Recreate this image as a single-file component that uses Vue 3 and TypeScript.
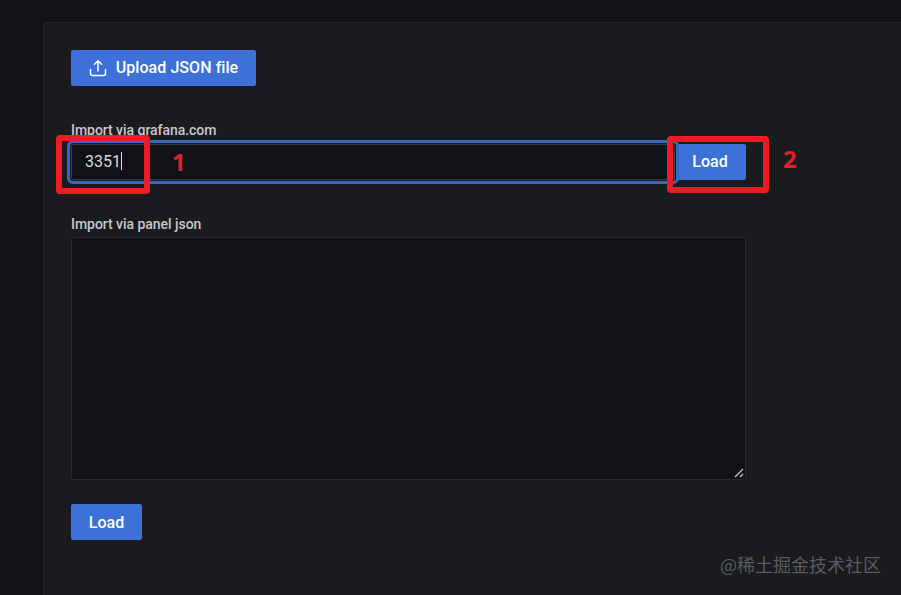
<script setup lang="ts">
const title: string = 'Upload JSON file'
</script>

<template>
  <div class="page">
    <main class="panel">
      <button class="btn upload">
        <svg class="icon" viewBox="0 0 18 18" width="18" height="18" fill="none" stroke="#fff" stroke-width="1.5" stroke-linecap="round" stroke-linejoin="round">
          <path d="M1.5 10.5v4a2 2 0 0 0 2 2h11a2 2 0 0 0 2-2v-4" />
          <path d="M9 12V2M5.5 5.3 9 1.8l3.5 3.5" />
        </svg>
        <span class="upload-text">{{ title }}</span>
      </button>

      <label class="label first">Import via grafana.com</label>
      <div class="row">
        <div class="field">
          <span class="value">3351</span><span class="caret"></span>
        </div>
        <button class="btn load-inline">Load</button>
      </div>

      <label class="label second">Import via panel json</label>
      <div class="area">
        <svg class="grip" viewBox="0 0 10 10" width="10" height="10" stroke="#c8c8c8" stroke-width="1.3" fill="none">
          <path d="M1 9 9 1M6 9l3-3" />
        </svg>
      </div>

      <button class="btn load">Load</button>
    </main>

    <div class="mark mark-one"></div>
    <span class="num num-one">1</span>
    <div class="mark mark-two"></div>
    <span class="num num-two">2</span>
    <span class="watermark">@稀土掘金技术社区</span>
  </div>
</template>

<style>
html, body { margin: 0; background: #111217; }
</style>

<style scoped>
.page {
  position: relative;
  width: 901px;
  height: 595px;
  overflow: hidden;
  background: #111217;
  font-family: Roboto, "Liberation Sans", sans-serif;
  box-sizing: border-box;
  padding: 22px 0 0 43px;
}
.panel {
  box-sizing: border-box;
  height: 573px;
  background: #1a1b1f;
  border: 1px solid #202226;
  border-right: 0;
  border-bottom: 0;
  padding: 27px 0 0 27px;
  display: flex;
  flex-direction: column;
  align-items: flex-start;
}
.btn {
  border: 0;
  border-radius: 2px;
  background: #3d71d9;
  color: #fff;
  font-family: inherit;
  font-size: 16px;
  font-weight: 500;
  height: 36px;
  padding: 0 0 1px;
  box-sizing: border-box;
  display: flex;
  align-items: center;
  justify-content: center;
}
.upload { width: 185px; gap: 9px; }
.upload-text { letter-spacing: 0.06px; }
.icon { flex: none; }
.label {
  color: #c7c8cc;
  font-size: 14px;
  font-weight: 500;
  line-height: 16px;
  letter-spacing: -0.04px;
}
.first { margin-top: 36px; }
.row {
  display: flex;
  gap: 2px;
  margin-top: 6px;
  width: 675px;
  height: 36px;
}
.field {
  flex: 1;
  position: relative;
  z-index: 1;
  box-sizing: border-box;
  background: #111217;
  border: 1px solid #3a3b40;
  border-radius: 2px;
  outline: 3px solid #3866c0;
  outline-offset: 1px;
  display: flex;
  align-items: center;
  padding: 0 0 2px 13px;
  color: #d8d9dc;
  font-size: 16px;
}
.caret {
  display: inline-block;
  width: 1px;
  height: 18px;
  background: #e0e0e0;
}
.load-inline {
  flex: none;
  width: 69px;
  height: 36px;
  padding-right: 3px;
}
.second { margin-top: 36px; }
.area {
  position: relative;
  box-sizing: border-box;
  width: 675px;
  height: 243px;
  margin-top: 5px;
  background: #111217;
  border: 1px solid #28292d;
  border-radius: 2px;
}
.grip { position: absolute; right: 1px; bottom: 1px; }
.load { width: 71px; margin-top: 24px; padding: 0; }
.mark {
  position: absolute;
  z-index: 2;
  box-sizing: border-box;
  border: 6px solid #ec1c24;
  border-radius: 4px;
}
.mark-one { left: 56px; top: 135px; width: 94px; height: 59px; }
.mark-two { left: 667px; top: 136px; width: 102px; height: 57px; }
.num {
  position: absolute;
  z-index: 2;
  color: #e3202a;
  font-family: "Open Sans", sans-serif;
  font-weight: 700;
  font-size: 24px;
  line-height: 30px;
}
.num-one { left: 172px; top: 147px; }
.num-two { left: 783px; top: 144px; }
.watermark {
  position: absolute;
  left: 720px;
  top: 553px;
  color: #5b5c60;
  font-family: "Noto Sans CJK SC", sans-serif;
  font-size: 18px;
  line-height: 22px;
  white-space: nowrap;
}
</style>
